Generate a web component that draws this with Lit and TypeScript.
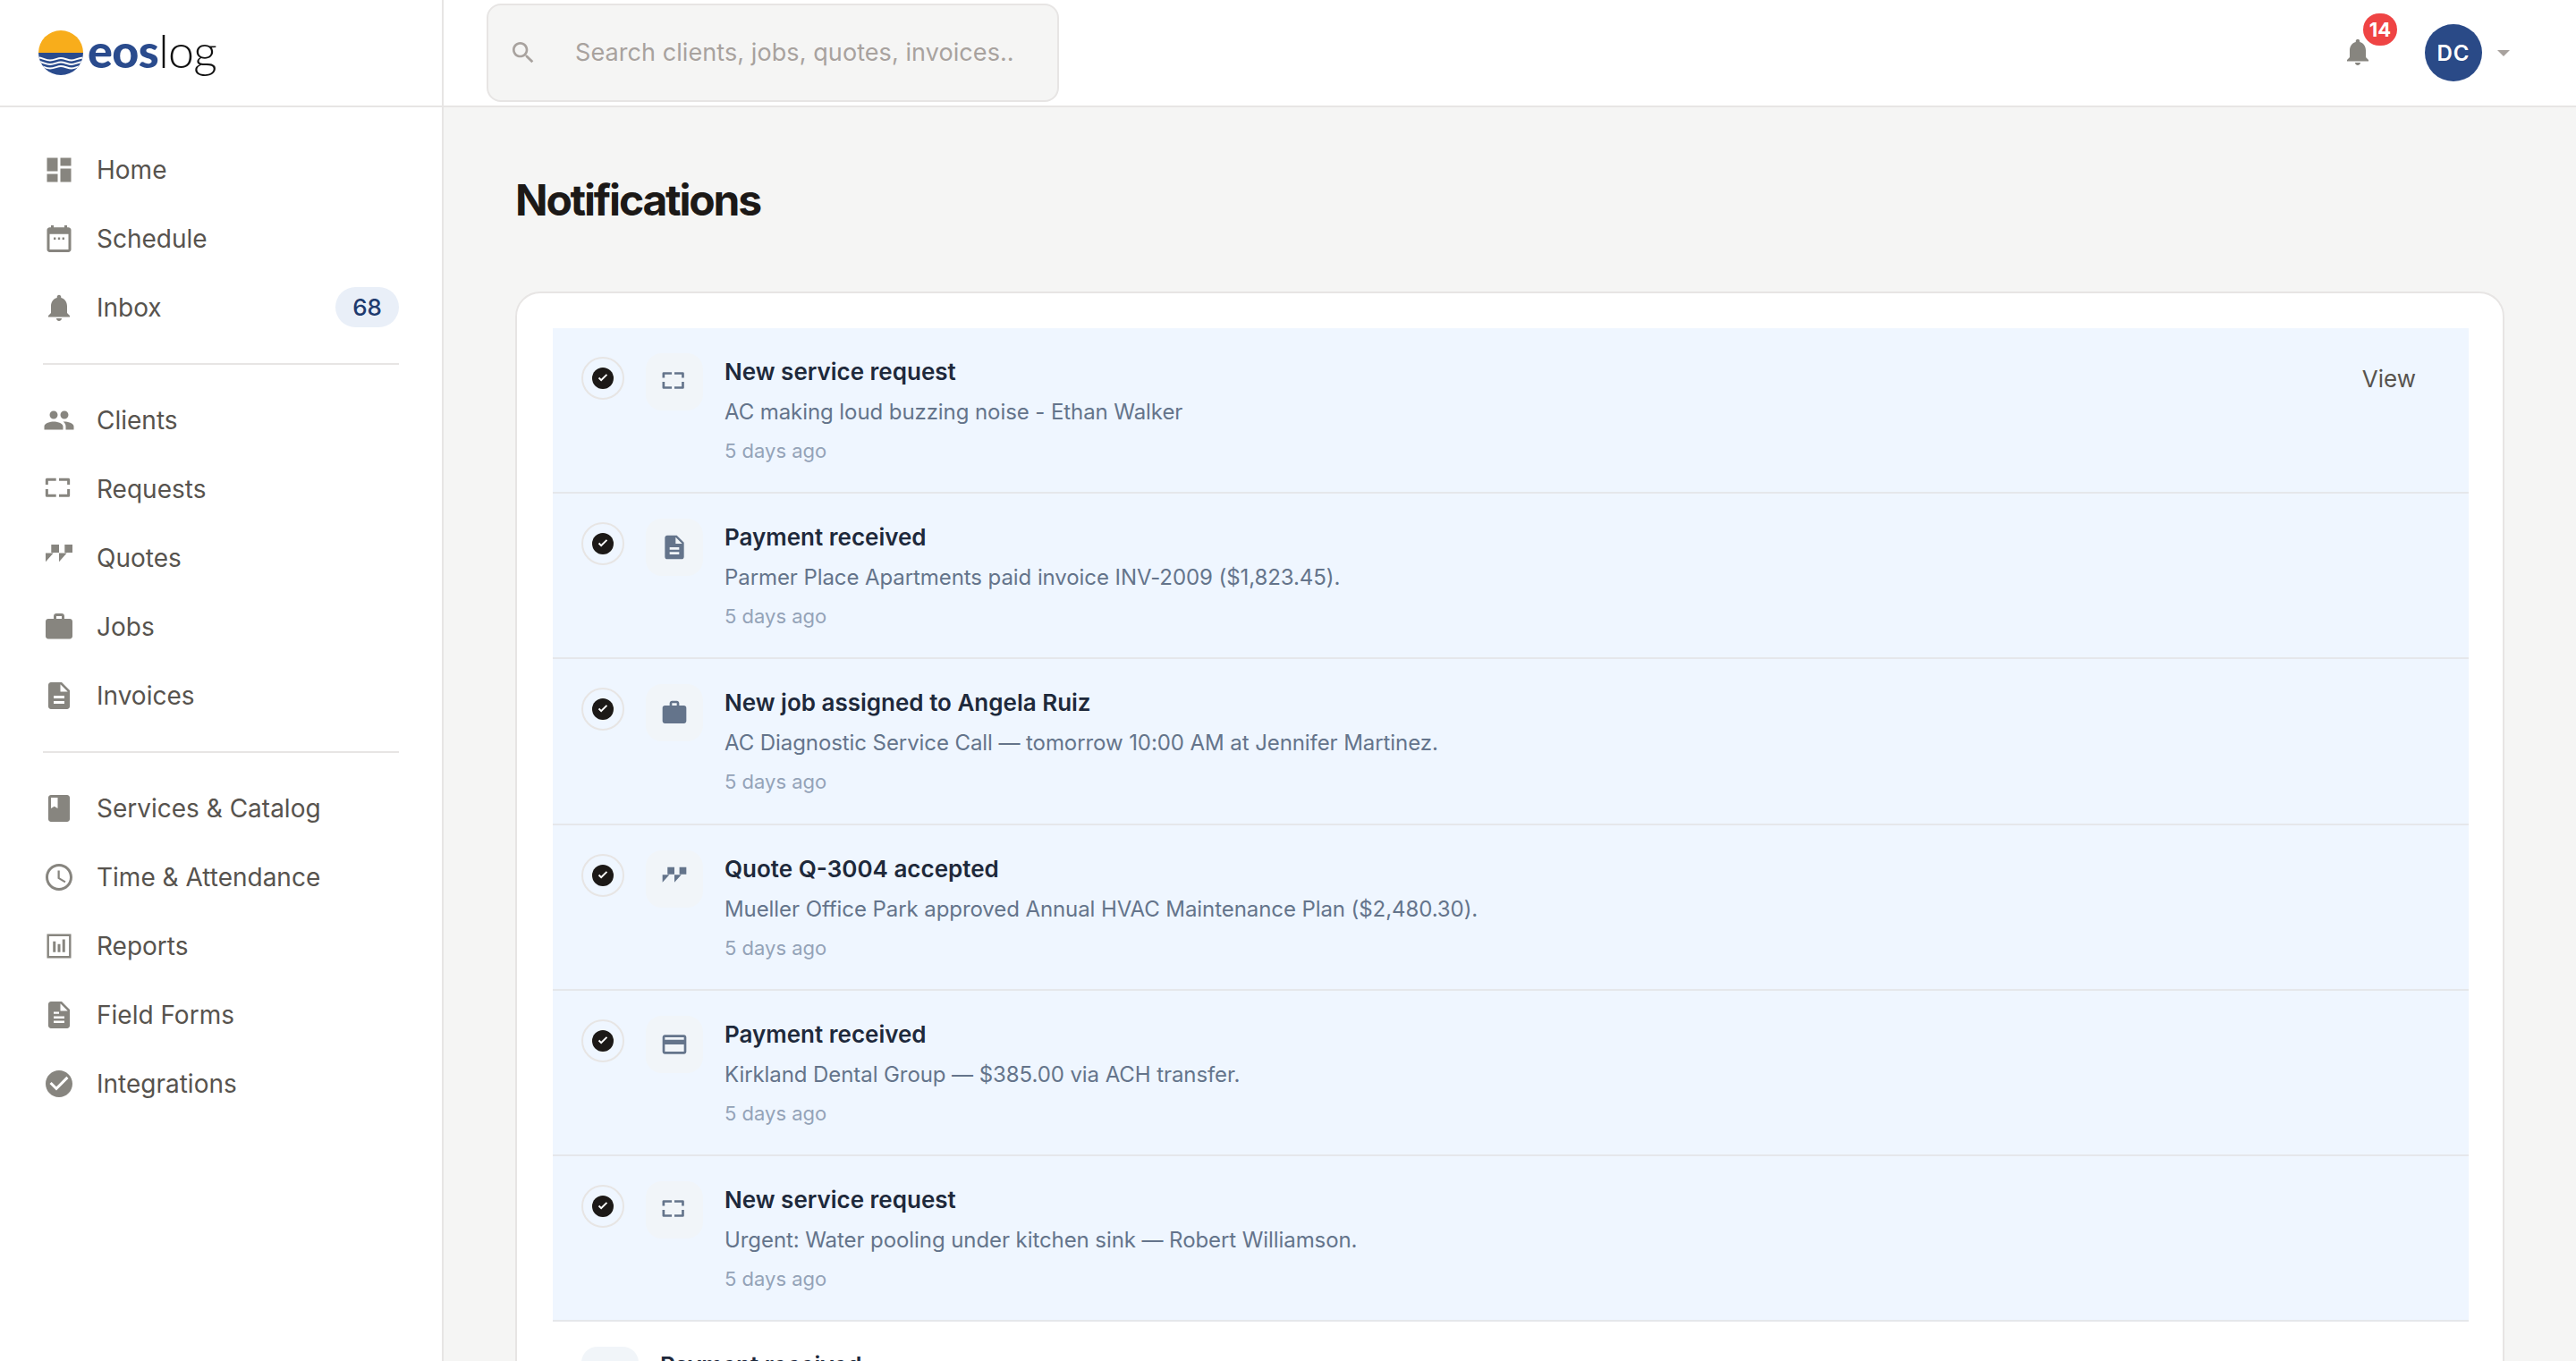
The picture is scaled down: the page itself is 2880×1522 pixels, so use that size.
import { LitElement, html, css, svg } from 'lit';
import { customElement } from 'lit/decorators.js';
import { classMap } from 'lit/directives/class-map.js';

// Icon paths, all on a 24 unit box
const ICONS: Record<string, unknown> = {
  dashboard: svg`<path d="M3 13h8V3H3v10zm0 8h8v-6H3v6zm10 0h8V11h-8v10zm0-18v6h8V3h-8z"/>`,
  calendar: svg`<path fill-rule="evenodd" d="M19 3.5h-1V2h-2v1.5H8V2H6v1.5H5c-1.1 0-2 .9-2 2V20c0 1.1.9 2 2 2h14c1.1 0 2-.9 2-2V5.5c0-1.100-.9-2-2-2zM5 8.500h14V20H5z"/><path d="M8 11h1.600v1.600H8zM11.200 11h1.600v1.600h-1.600zM14.400 11H16v1.600h-1.600z"/>`,
  bell: svg`<path d="M12 22c1.100 0 2-.9 2-2h-4c0 1.100.89 2 2 2zm6-6v-5c0-3.070-1.640-5.640-4.500-6.320V4c0-.83-.67-1.500-1.500-1.500s-1.500.67-1.500 1.500v.68C7.630 5.360 6 7.920 6 11v5l-2 2v1h16v-1l-2-2z"/>`,
  people: svg`<path d="M16 11c1.660 0 2.990-1.340 2.990-3S17.660 5 16 5c-1.660 0-3 1.340-3 3s1.340 3 3 3zm-8 0c1.660 0 2.990-1.340 2.990-3S9.660 5 8 5C6.340 5 5 6.340 5 8s1.340 3 3 3zm0 2c-2.330 0-7 1.170-7 3.500V19h14v-2.500c0-2.330-4.670-3.500-7-3.500zm8 0c-.29 0-.62.02-.97.05 1.160.84 1.970 1.970 1.970 3.450V19h6v-2.500c0-2.330-4.670-3.500-7-3.500z"/>`,
  request: svg`<path fill="none" stroke="currentColor" stroke-width="2" stroke-linejoin="round" d="M9.800 4.900H2.900V8.700M12 4.900H19.100V8.700M2.900 12V16.900H9.800M19.100 12V16.900H12"/>`,
  quote: svg`<path d="M6.200 2H12V8H6.200zM2 8.400H7.800L2 14.900zM16.200 2H22V8H16.200zM12 8.400H17.800L12 14.900z"/>`,
  work: svg`<path d="M20 6h-4V4c0-1.110-.89-2-2-2h-4c-1.110 0-2 .89-2 2v2H4c-1.110 0-1.990.89-1.990 2L2 19c0 1.110.89 2 2 2h16c1.110 0 2-.89 2-2V8c0-1.110-.89-2-2-2zm-6 0h-4V4h4v2z"/>`,
  invoice: svg`<path d="M14 2H6c-1.100 0-1.990.9-1.990 2L4 20c0 1.100.89 2 1.990 2H18c1.100 0 2-.9 2-2V8l-6-6zm2 16H8v-2h8v2zm0-4H8v-2h8v2zm-3-5V3.500L18.500 9H13z"/>`,
  form: svg`<path fill-rule="evenodd" d="M14 2H6c-1.100 0-2 .9-2 2v16c0 1.100.9 2 2 2h12c1.100 0 2-.9 2-2V8l-6-6zM13 9V3.500L18.500 9zM8 9.600h4v1.600H8zM8 13h8v1.600H8zM8 16.400h8V18H8z"/>`,
  book: svg`<path d="M18 2H6c-1.100 0-2 .9-2 2v16c0 1.100.9 2 2 2h12c1.100 0 2-.9 2-2V4c0-1.100-.9-2-2-2zM6 4h5v8l-2.500-1.500L6 12V4z"/>`,
  clock: svg`<path d="M11.990 2C6.470 2 2 6.480 2 12s4.470 10 9.990 10C17.520 22 22 17.520 22 12S17.520 2 11.990 2zM12 20c-4.420 0-8-3.580-8-8s3.580-8 8-8 8 3.580 8 8-3.580 8-8 8zm.5-13H11v6l5.250 3.150.75-1.230-4.500-2.670z"/>`,
  report: svg`<path fill-rule="evenodd" d="M3 3h18v18H3zM4.600 4.600v14.800h14.800V4.600zM7.500 8.500h2v8h-2zM11 10.500h2v6h-2zM14.500 7h2v9.500h-2z"/>`,
  check: svg`<path d="M12 2C6.480 2 2 6.480 2 12s4.480 10 10 10 10-4.480 10-10S17.520 2 12 2zm-2 15l-5-5 1.410-1.410L10 14.170l7.590-7.590L19 8l-9 9z"/>`,
  tick: svg`<path d="M9.200 17.200 4.300 12.300l2-2 2.900 2.900 8.500-8.500 2 2z"/>`,
  search: svg`<path d="M15.500 14h-.79l-.28-.27C15.410 12.590 16 11.110 16 9.500 16 5.910 13.090 3 9.500 3S3 5.910 3 9.500 5.910 16 9.500 16c1.610 0 3.090-.59 4.230-1.570l.27.28v.79l5 4.990L20.490 19l-4.990-5zm-6 0C7.010 14 5 11.990 5 9.500S7.010 5 9.500 5 14 7.010 14 9.500 11.990 14 9.500 14z"/>`,
  card: svg`<path d="M20 4H4c-1.110 0-1.990.89-1.990 2L2 18c0 1.110.89 2 2 2h16c1.110 0 2-.89 2-2V6c0-1.110-.89-2-2-2zm0 14H4v-6h16v6zm0-10H4V6h16v2z"/>`,
};

const icon = (name: string) => html`<svg viewBox="0 0 24 24" fill="currentColor">${ICONS[name]}</svg>`;

const NAV_GROUPS = [
  [
    { icon: 'dashboard', label: 'Home' },
    { icon: 'calendar', label: 'Schedule' },
    { icon: 'bell', label: 'Inbox', badge: '68' },
  ],
  [
    { icon: 'people', label: 'Clients' },
    { icon: 'request', label: 'Requests' },
    { icon: 'quote', label: 'Quotes' },
    { icon: 'work', label: 'Jobs' },
    { icon: 'invoice', label: 'Invoices' },
  ],
  [
    { icon: 'book', label: 'Services & Catalog' },
    { icon: 'clock', label: 'Time & Attendance' },
    { icon: 'report', label: 'Reports' },
    { icon: 'form', label: 'Field Forms' },
    { icon: 'check', label: 'Integrations' },
  ],
];

const NOTIFICATIONS = [
  { icon: 'request', title: 'New service request', body: 'AC making loud buzzing noise - Ethan Walker', unread: true, view: true },
  { icon: 'invoice', title: 'Payment received', body: 'Parmer Place Apartments paid invoice INV-2009 ($1,823.45).', unread: true },
  { icon: 'work', title: 'New job assigned to Angela Ruiz', body: 'AC Diagnostic Service Call — tomorrow 10:00 AM at Jennifer Martinez.', unread: true },
  { icon: 'quote', title: 'Quote Q-3004 accepted', body: 'Mueller Office Park approved Annual HVAC Maintenance Plan ($2,480.30).', unread: true },
  { icon: 'card', title: 'Payment received', body: 'Kirkland Dental Group — $385.00 via ACH transfer.', unread: true },
  { icon: 'request', title: 'New service request', body: 'Urgent: Water pooling under kitchen sink — Robert Williamson.', unread: true },
  { icon: 'card', title: 'Payment received', body: 'Northgate Plaza — $612.00 via card.', unread: false },
];

@customElement('app-root')
export class AppRoot extends LitElement {
  static styles = css`
    :host {
      display: grid;
      grid-template-columns: 496px 1fr;
      height: 100vh;
      overflow: hidden;
      font-family: Inter, 'Liberation Sans', sans-serif;
      background: #f5f5f4;
      color: #1c1917;
    }
    svg {
      display: block;
      flex: none;
    }
    .sidebar {
      background: #fff;
      border-right: 2px solid #e7e5e4;
      box-sizing: border-box;
      min-width: 0;
    }
    .brand {
      height: 120px;
      box-sizing: border-box;
      border-bottom: 2px solid #e7e5e4;
      display: flex;
      align-items: center;
      padding-left: 43px;
      gap: 5px;
    }
    .wordmark {
      font-family: Lato, 'Open Sans', sans-serif;
      font-size: 52px;
      line-height: 1;
      letter-spacing: -0.6px;
      color: #111;
      font-weight: 300;
      margin-top: -6px;
    }
    .wordmark b {
      font-weight: 900;
      color: #2a4b8d;
    }
    .nav {
      padding: 35px 48px 0;
    }
    .group {
      display: flex;
      flex-direction: column;
      gap: 8px;
    }
    .divider {
      height: 2px;
      background: #e7e5e4;
      margin: 27.5px 0;
    }
    .item {
      height: 69px;
      display: flex;
      align-items: center;
      gap: 24px;
      font-size: 28px;
      color: #57534e;
    }
    .item svg {
      width: 36px;
      height: 36px;
      color: #87857f;
    }
    .item .label {
      flex: 1;
    }
    .count {
      width: 71px;
      height: 45px;
      border-radius: 23px;
      background: #e9eff8;
      color: #1e3a6e;
      font-size: 26px;
      font-weight: 500;
      display: flex;
      align-items: center;
      justify-content: center;
    }
    .right {
      min-width: 0;
      display: flex;
      flex-direction: column;
    }
    .topbar {
      height: 120px;
      flex: none;
      box-sizing: border-box;
      background: #fff;
      border-bottom: 2px solid #e7e5e4;
      display: flex;
      align-items: center;
      padding: 0 74px 0 48px;
    }
    .search {
      width: 640px;
      height: 110px;
      box-sizing: border-box;
      margin-top: -1px;
      border: 2px solid #e7e5e4;
      border-radius: 16px;
      background: #f5f5f4;
      display: flex;
      align-items: center;
      padding-left: 23px;
      gap: 42px;
    }
    .search svg {
      width: 32px;
      height: 32px;
      color: #a8a29e;
    }
    .search input {
      flex: 1;
      min-width: 0;
      border: none;
      outline: none;
      background: none;
      padding: 0;
      font: inherit;
      font-size: 27px;
      letter-spacing: 0.08px;
      color: #1c1917;
    }
    .search input::placeholder {
      color: #a8a29e;
      opacity: 1;
    }
    .top-actions {
      margin-left: auto;
      display: flex;
      align-items: center;
    }
    .bell {
      position: relative;
      width: 36px;
      height: 36px;
      margin-right: 57px;
      margin-top: -2px;
      color: #87857f;
    }
    .bell svg {
      width: 36px;
      height: 36px;
    }
    .bell span {
      position: absolute;
      top: -25px;
      left: 24px;
      width: 38px;
      height: 36px;
      border-radius: 18px;
      background: #ef4444;
      color: #fff;
      font-size: 22px;
      font-weight: 700;
      display: flex;
      align-items: center;
      justify-content: center;
    }
    .avatar {
      width: 64px;
      height: 64px;
      border-radius: 50%;
      background: #2a4a87;
      color: #fff;
      font-size: 24px;
      font-weight: 600;
      letter-spacing: 1px;
      display: flex;
      align-items: center;
      justify-content: center;
    }
    .caret {
      width: 0;
      height: 0;
      margin-left: 17px;
      border-left: 7px solid transparent;
      border-right: 7px solid transparent;
      border-top: 7px solid #a8a29e;
    }
    .main {
      flex: 1;
      min-height: 0;
      overflow: hidden;
      padding: 0 80px;
    }
    h1 {
      margin: 71px 0 0;
      font-size: 48px;
      line-height: 66px;
      font-weight: 700;
      letter-spacing: -2.2px;
      color: #1c1917;
    }
    .panel {
      margin-top: 69px;
      background: #fff;
      border: 2px solid #e7e5e4;
      border-radius: 28px;
      padding: 39px 38px 39px 40px;
    }
    .row {
      display: flex;
      align-items: flex-start;
      padding: 28px 32px;
      height: 127.2px;
      border-bottom: 2px solid #e5e7eb;
      gap: 24px;
    }
    .row.unread {
      background: #eff6ff;
    }
    .ring {
      width: 48px;
      height: 48px;
      box-sizing: border-box;
      margin-top: 4px;
      border: 2px solid #e7e5e4;
      border-radius: 50%;
      display: flex;
      align-items: center;
      justify-content: center;
    }
    .dot {
      width: 24px;
      height: 24px;
      border-radius: 50%;
      background: #1c1917;
      color: #fff;
      display: flex;
      align-items: center;
      justify-content: center;
    }
    .dot svg {
      width: 16px;
      height: 16px;
    }
    .tile {
      width: 64px;
      height: 64px;
      flex: none;
      border-radius: 18px;
      background: #f1f5f9;
      color: #64748b;
      display: flex;
      align-items: center;
      justify-content: center;
    }
    .tile svg {
      width: 32px;
      height: 32px;
    }
    .text {
      flex: 1;
      min-width: 0;
    }
    .title {
      font-size: 26px;
      line-height: 42px;
      font-weight: 600;
      color: #1e293b;
    }
    .body {
      margin-top: 5px;
      font-size: 24px;
      line-height: 38px;
      letter-spacing: -0.08px;
      color: #64748b;
    }
    .time {
      margin-top: 7px;
      font-size: 22px;
      line-height: 35px;
      color: #94a3b8;
    }
    .view {
      margin: 11px 27px 0 0;
      font-size: 26px;
      line-height: 36px;
      color: #57534e;
    }
  `;

  renderLogo() {
    // sun over water, waves are white strokes over the blue half
    return html`<svg width="50" height="50" viewBox="0 0 50 50">
      <defs><clipPath id="sun"><circle cx="25" cy="25" r="25" /></clipPath></defs>
      <g clip-path="url(#sun)">
        <rect width="50" height="25" fill="#f8ad1b" />
        <rect y="25" width="50" height="25" fill="#2a4b8d" />
        <g fill="none" stroke="#fff" stroke-width="2">
          <path d="M0 30.500c4 0 8 3 13 3s8-2.500 12-2.500 8 2.500 12 2.500 8-3 13-3" />
          <path d="M0 35c4 0 8 3 13 3s8-2.500 12-2.500 8 2.500 12 2.500 8-3 13-3" />
          <path d="M0 39.500c4 0 8 3 13 3s8-2.500 12-2.500 8 2.500 12 2.500 8-3 13-3" />
        </g>
      </g>
    </svg>`;
  }

  renderItem(it: { icon: string; label: string; badge?: string }) {
    return html`<div class="item">
      ${icon(it.icon)}
      <span class="label">${it.label}</span>
      ${it.badge ? html`<span class="count">${it.badge}</span>` : ''}
    </div>`;
  }

  renderRow(n: (typeof NOTIFICATIONS)[number]) {
    return html`<div class=${classMap({ row: true, unread: n.unread })}>
      ${n.unread ? html`<div class="ring"><div class="dot">${icon('tick')}</div></div>` : ''}
      <div class="tile">${icon(n.icon)}</div>
      <div class="text">
        <div class="title">${n.title}</div>
        <div class="body">${n.body}</div>
        <div class="time">5 days ago</div>
      </div>
      ${n.view ? html`<div class="view">View</div>` : ''}
    </div>`;
  }

  render() {
    return html`
      <aside class="sidebar">
        <div class="brand">
          ${this.renderLogo()}
          <span class="wordmark"><b>eos</b>log</span>
        </div>
        <nav class="nav">
          ${NAV_GROUPS.map(
            (group, i) => html`
              ${i ? html`<div class="divider"></div>` : ''}
              <div class="group">${group.map((it) => this.renderItem(it))}</div>
            `,
          )}
        </nav>
      </aside>
      <div class="right">
        <header class="topbar">
          <label class="search">
            ${icon('search')}
            <input type="text" placeholder="Search clients, jobs, quotes, invoices.." />
          </label>
          <div class="top-actions">
            <div class="bell">${icon('bell')}<span>14</span></div>
            <div class="avatar">DC</div>
            <div class="caret"></div>
          </div>
        </header>
        <main class="main">
          <h1>Notifications</h1>
          <section class="panel">${NOTIFICATIONS.map((n) => this.renderRow(n))}</section>
        </main>
      </div>
    `;
  }
}
